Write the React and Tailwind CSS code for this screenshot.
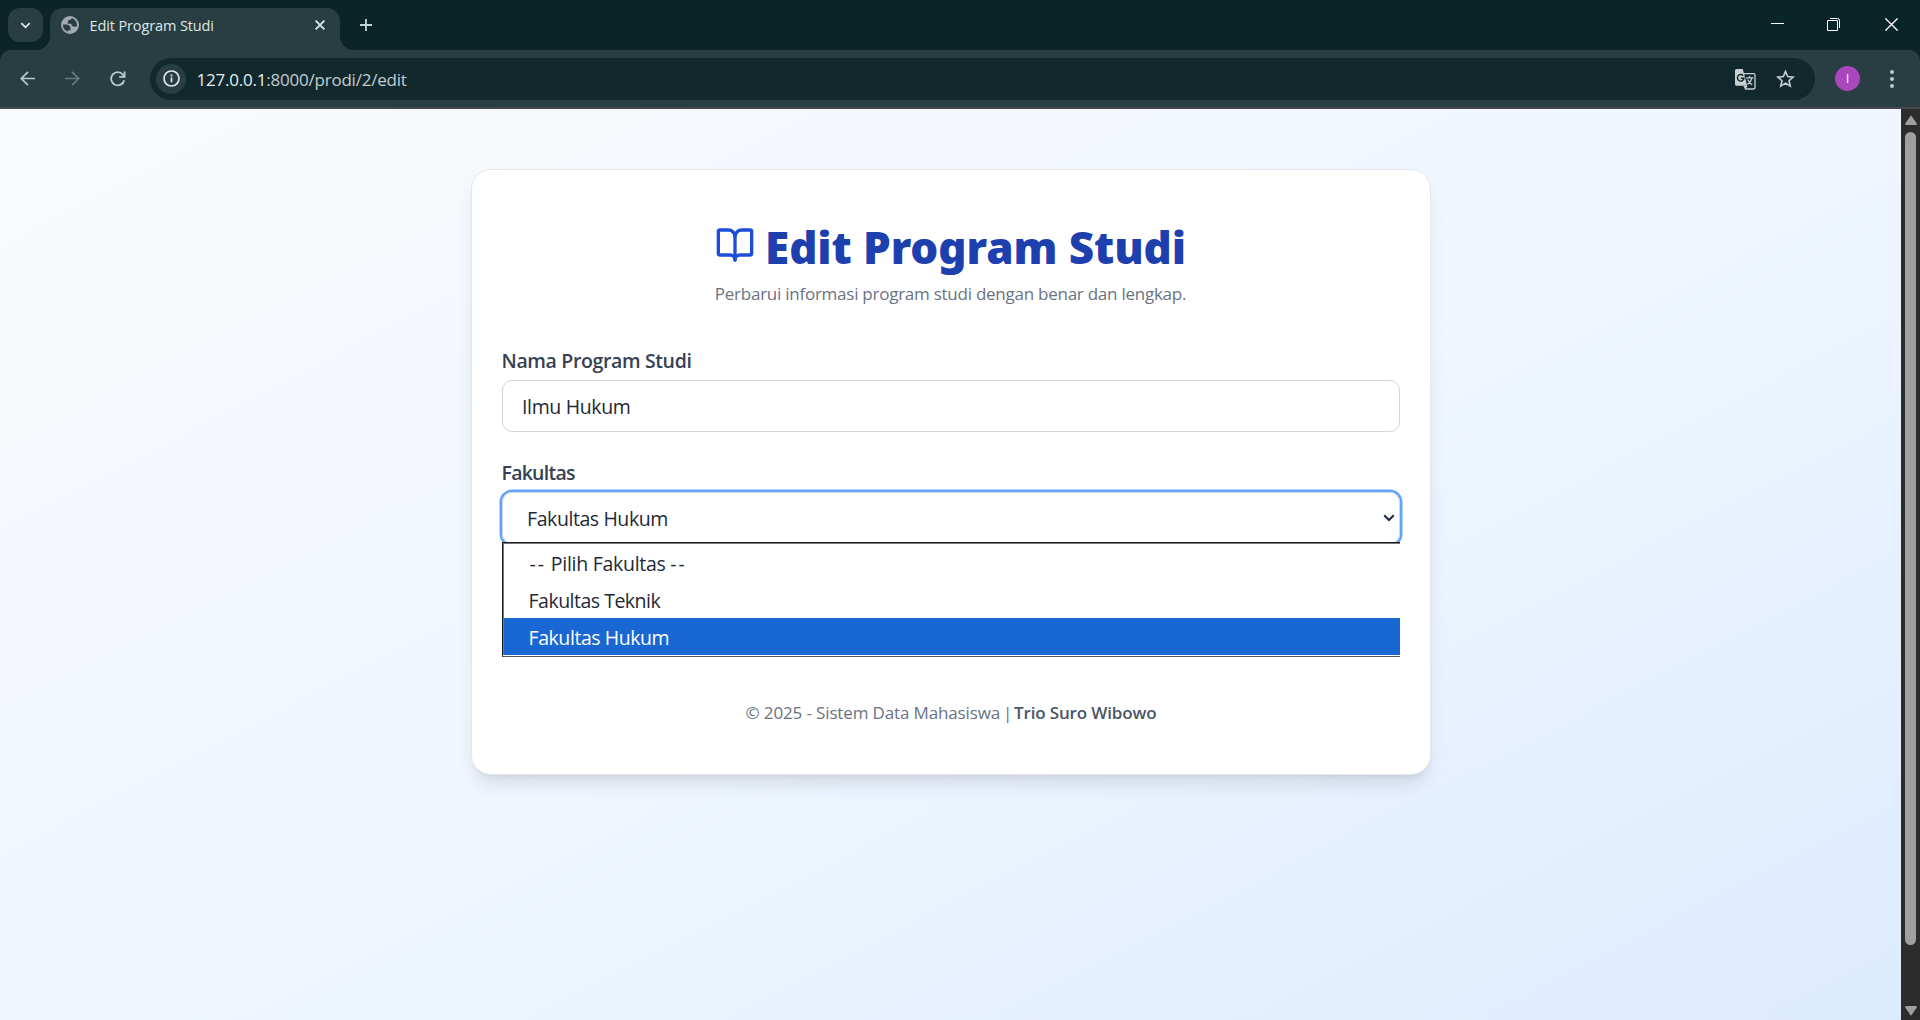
import { BookOpen } from "lucide-react";

function ChevronIcon({ className }) {
  return (
    <svg viewBox="0 0 12 8" className={className} fill="none" stroke="currentColor" strokeWidth="2">
      <path d="M1.2 1.2 6 6l4.8-4.8" />
    </svg>
  );
}

function GlobeIcon() {
  return (
    <svg viewBox="0 0 22 22" className="size-[22px]">
      <circle cx="11" cy="11" r="8" fill="none" stroke="#a3a9b3" strokeWidth="1.9" />
      <path
        d="M3 10.6C3.4 6.2 7 3 11.2 3c1 0 1.8.2 2.4.4-.9.6-1.4 1.2-1.5 2.2-2.6.2-3.7 1.6-3.3 4.2h3.5c0 2 1.1 3 3.3 3 1.2 0 2.2-.4 3.2-1.2-.2 4-3.3 7.4-7.6 7.6-.8 0-1.6-.1-2.4-.4v-2.4h2.7c.5-3.6-1-5.6-4.3-5.8z"
        fill="#a3a9b3"
      />
    </svg>
  );
}

function TabStrip() {
  return (
    <div className="flex h-[50px] items-center bg-[#0b2427] pl-2 text-[#dfe7e8]">
      <div className="flex h-[34px] w-[35px] items-center justify-center rounded-xl bg-[#283e42]">
        <ChevronIcon className="h-[7px] w-[11px]" />
      </div>
      <div className="relative ml-[7px] flex h-[42px] w-[290px] items-center self-end rounded-t-[13px] bg-[#283e42] pb-2 pl-[9px] pr-[15px]">
        <svg viewBox="0 0 14 14" className="absolute -left-3.5 bottom-0 size-3.5" fill="#283e42">
          <path d="M14 0v14H0A14 14 0 0 0 14 0z" />
        </svg>
        <svg viewBox="0 0 14 14" className="absolute -right-3.5 bottom-0 size-3.5" fill="#283e42">
          <path d="M0 0v14h14A14 14 0 0 1 0 0z" />
        </svg>
        <GlobeIcon />
        <span className="ml-[8.5px] pt-0.5 text-[14.5px] tracking-[-0.12px]">Edit Program Studi</span>
        <svg viewBox="0 0 10 10" className="ml-auto size-[10px]" fill="none" stroke="currentColor" strokeWidth="1.8">
          <path d="M.6.6l8.8 8.8M9.4.6.6 9.4" />
        </svg>
      </div>
      <svg viewBox="0 0 12 12" className="ml-5 size-3" fill="none" stroke="#bfd5d8" strokeWidth="1.8">
        <path d="M6 0v12M0 6h12" />
      </svg>
      <div className="ml-auto mb-0.5 flex items-center pr-[22px] text-white">
        <svg viewBox="0 0 13 13" className="size-[13px]" stroke="currentColor">
          <path d="M0 5.5h13" />
        </svg>
        <svg viewBox="0 0 13 13" className="ml-[43px] size-[13px]" fill="none" stroke="currentColor">
          <path d="M.5 2.5h10v10H.5zM3 .5h7.5a2 2 0 0 1 2 2V10" />
        </svg>
        <svg viewBox="0 0 13 13" className="ml-[45px] size-[13px]" fill="none" stroke="currentColor" strokeWidth="1.3">
          <path d="M.4.4l12.2 12.2M12.6.4.4 12.6" />
        </svg>
      </div>
    </div>
  );
}

function TranslateIcon() {
  return (
    <svg viewBox="0 0 21 21" className="size-[21px]" fill="none">
      <path d="M9 4.6h9.6a1.4 1.4 0 0 1 1.4 1.4v12.6a1.4 1.4 0 0 1-1.4 1.4H10" stroke="#c7cfd0" strokeWidth="1.3" />
      <path d="M1.5 0h6.3l4.4 16.8H1.5A1.5 1.5 0 0 1 0 15.3V1.5A1.5 1.5 0 0 1 1.5 0z" fill="#c7cfd0" />
      <path d="M8.5 17h4.2l-2.6 3.4z" fill="#c7cfd0" />
      <path d="M8.2 6.6A3.3 3.3 0 1 0 9 9.2H5.8" stroke="#11292d" strokeWidth="1.4" />
      <path d="M11 8.8h7.5M14.6 7v1.8M17 9c-.6 2.8-2.4 5-4.6 6.6M12.6 10.4c1 2.2 2.6 4 4.6 5.4" stroke="#c7cfd0" strokeWidth="1.2" />
    </svg>
  );
}

function Toolbar() {
  return (
    <div className="h-[59px] bg-[#0b2427]">
      <div className="flex h-full items-center rounded-t-[11px] border-b-2 border-[#45494b] bg-[#283e42] pl-5 text-[#b3cdd0]">
        <svg viewBox="0 0 15 15" className="size-[15px]" fill="none" stroke="currentColor" strokeWidth="1.7">
          <path d="M15 7.5H1.5M8 .8 1.3 7.5 8 14.2" />
        </svg>
        <svg viewBox="0 0 15 15" className="ml-[30px] size-[15px] text-[#647a7e]" fill="none" stroke="currentColor" strokeWidth="1.7">
          <path d="M0 7.5h13.5M7 .8l6.7 6.7L7 14.2" />
        </svg>
        <svg viewBox="0 0 16 16" className="ml-[30px] size-4" fill="none" stroke="currentColor" strokeWidth="1.8">
          <path d="M14.2 9.2A6.6 6.6 0 1 1 12.9 3.6L14 5" />
          <path d="M14.6 .6v5.2H9.2" />
        </svg>
        <div className="ml-6 flex h-[42px] w-[1665px] items-center rounded-full bg-[#11292d] pl-1.5 pr-5">
          <div className="flex size-[30px] items-center justify-center rounded-full bg-[#283e42]">
            <svg viewBox="0 0 17 17" className="size-[17px]" fill="none" stroke="#dfe7e8" strokeWidth="1.7">
              <circle cx="8.5" cy="8.5" r="7.5" />
              <path d="M8.5 7.6v4.6M8.5 4.6v1.8" />
            </svg>
          </div>
          <span className="ml-[10.5px] pt-0.5 text-[17px] tracking-[-0.22px] text-[#c3cdcf]">
            <span className="text-[#e6eeef]">127.0.0.1</span>:8000/prodi/2/edit
          </span>
          <div className="ml-auto flex items-center gap-5">
            <div className="pt-0.5">
              <TranslateIcon />
            </div>
            <svg viewBox="0 0 20 19" className="size-[19px]" fill="none" stroke="#c7cfd0" strokeWidth="1.7">
              <path d="M10 2.2l2.3 5.3 5.7.5-4.3 3.8 1.3 5.7-5-3.1-5 3.1 1.3-5.7L2 8l5.7-.5z" />
            </svg>
          </div>
        </div>
        <div className="ml-5 flex size-[25px] items-center justify-center rounded-full bg-[#ab47bc] text-[13px] text-white">
          I
        </div>
        <svg viewBox="0 0 4 18" className="ml-[30px] h-[18px] w-1" fill="currentColor">
          <circle cx="2" cy="2" r="2" />
          <circle cx="2" cy="9" r="2" />
          <circle cx="2" cy="16" r="2" />
        </svg>
      </div>
    </div>
  );
}

function FakultasSelect() {
  return (
    <div className="relative mt-[7px]">
      <div className="flex h-[52px] items-center justify-between rounded-[10px] border border-gray-300 pl-[24.5px] pr-[4px] text-[#1f2937] shadow-[0_0_0_2.5px_#60a5fa]">
        <span className="pt-0.5 text-[19.5px] tracking-[-0.42px]">Fakultas Hukum</span>
        <ChevronIcon className="h-[8px] w-[12px]" />
      </div>
      <div className="absolute inset-x-0 top-[50px] h-[115px] border-b border-l border-t border-b-[#555] border-l-[#1b1b1b] border-t-[#1b1b1b] bg-white">
        <div className="border-l border-t border-[#777] text-[19.5px] leading-[35px] text-[#1f2937]">
          <div className="h-[37px] pl-[26px] pt-[2px] tracking-[-0.28px]">
            <span className="tracking-[2px]">--</span> Pilih Fakultas <span className="tracking-[2px]">--</span>
          </div>
          <div className="h-[37px] pl-[25px] pt-[2px] tracking-[-0.5px]">Fakultas Teknik</div>
          <div className="h-[37px] bg-[#1967d2] pl-[25px] pt-[2px] tracking-[-0.43px] text-white">Fakultas Hukum</div>
        </div>
      </div>
    </div>
  );
}

function EditCard() {
  return (
    <div className="mx-auto mt-[60px] h-[606px] w-[960px] rounded-[20px] border border-gray-200 bg-white px-[30px] pt-[52px] shadow-[0_12.5px_19px_-4px_rgba(0,0,0,0.1),0_5px_7.5px_-5px_rgba(0,0,0,0.1)]">
      <h1 className="flex h-[50px] items-center justify-center gap-[10px] font-['Noto_Sans'] text-[44px] font-black leading-[50px] tracking-[-0.1px] text-[#1e40af]">
        <BookOpen className="mb-[4px] size-10 text-[#1d4ed8]" />
        Edit Program Studi
      </h1>
      <p className="mt-[9px] text-center text-[17px] leading-[25px] tracking-[-0.25px] text-gray-500">
        Perbarui informasi program studi dengan benar dan lengkap.
      </p>
      <div className="mt-[42px] text-[19.5px] font-semibold leading-[25px] tracking-[-0.36px] text-gray-700">
        Nama Program Studi
      </div>
      <div className="mt-[7px] flex h-[52px] items-center rounded-[10px] border border-gray-300 pl-[19.5px] pt-0.5 text-[19.5px] tracking-[-0.35px] text-[#1f2937]">
        Ilmu Hukum
      </div>
      <div className="mt-7 text-[19.5px] font-semibold leading-[25px] tracking-[-0.75px] text-gray-700">
        Fakultas
      </div>
      <FakultasSelect />
      <p className="mt-[156px] whitespace-pre pl-px text-center text-[17px] leading-[25px] tracking-[-0.14px] text-gray-500">
        {"© 2025 - Sistem Data Mahasiswa"}
        <span className="tracking-[-1.4px]">{" | "}</span>
        <span className="font-semibold tracking-[-0.15px] text-gray-600">Trio Suro Wibowo</span>
      </p>
    </div>
  );
}

function Scrollbar() {
  return (
    <div className="flex w-[19px] flex-col items-center bg-[#2c2c2c] pb-1 pt-1.5">
      <svg viewBox="0 0 12 10" className="h-[10px] w-3" fill="#9f9f9f">
        <path d="M6 .3 11.8 8.4Q12 10 11 10H1Q0 10 .2 8.4z" />
      </svg>
      <div className="mt-[7px] h-[813px] w-[11px] rounded-full bg-[#9f9f9f]" />
      <svg viewBox="0 0 12 10" className="mt-auto h-[10px] w-3" fill="#9f9f9f">
        <path d="M6 9.7 11.8 1.6Q12 0 11 0H1Q0 0 .2 1.6z" />
      </svg>
    </div>
  );
}

export default function App() {
  return (
    <div className="flex h-[1020px] w-[1920px] flex-col overflow-hidden font-['Open_Sans',sans-serif]">
      <TabStrip />
      <Toolbar />
      <div className="flex min-h-0 flex-1">
        <main className="flex-1 overflow-hidden bg-[linear-gradient(to_bottom_right,#f9fafb,#eff6ff,#dbeafe)] bg-[length:1901px_975px] bg-no-repeat">
          <EditCard />
        </main>
        <Scrollbar />
      </div>
    </div>
  );
}
